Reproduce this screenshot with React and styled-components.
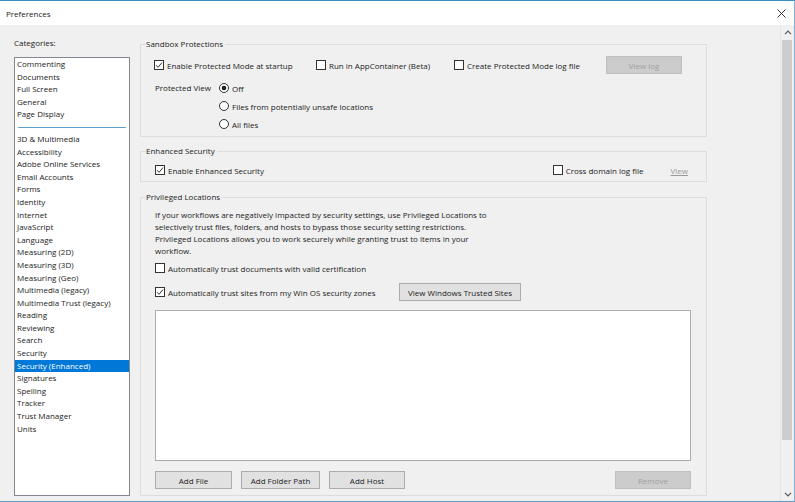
import React from "react";
import styled, { createGlobalStyle } from "styled-components";

const GlobalStyle = createGlobalStyle`
  html, body {
    margin: 0;
    padding: 0;
    background: #f0f0f0;
  }
  body {
    font-family: "Open Sans", "Noto Sans", sans-serif;
    font-size: 8px;
    color: #222;
  }
  * {
    box-sizing: border-box;
  }
`;

const categoriesTop = ["Commenting", "Documents", "Full Screen", "General", "Page Display"];

const categories = [
  "3D & Multimedia",
  "Accessibility",
  "Adobe Online Services",
  "Email Accounts",
  "Forms",
  "Identity",
  "Internet",
  "JavaScript",
  "Language",
  "Measuring (2D)",
  "Measuring (3D)",
  "Measuring (Geo)",
  "Multimedia (legacy)",
  "Multimedia Trust (legacy)",
  "Reading",
  "Reviewing",
  "Search",
  "Security",
  "Security (Enhanced)",
  "Signatures",
  "Spelling",
  "Tracker",
  "Trust Manager",
  "Units",
];

const CheckIcon = ({ checked }) => (
  <svg width="10" height="10" viewBox="0 0 10 10">
    <rect x="0.5" y="0.5" width="9" height="9" fill="#fff" stroke="#333" />
    {checked && (
      <path d="M2 5.2 L4 7.3 L8 2.6" fill="none" stroke="#333" strokeWidth="1" />
    )}
  </svg>
);

const RadioIcon = ({ checked }) => (
  <svg width="10" height="10" viewBox="0 0 10 10">
    <circle cx="5" cy="5" r="4.5" fill="#fff" stroke="#333" />
    {checked && <circle cx="5" cy="5" r="2.3" fill="#222" />}
  </svg>
);

const Preferences = () => {
  return (
    <>
      <GlobalStyle />
      <Window>
        <TitleBar>
          <span>Preferences</span>
          <CloseButton>
            <svg width="9" height="9" viewBox="0 0 9 9">
              <path d="M0.5 0.5 L8.5 8.5 M8.5 0.5 L0.5 8.5" stroke="#333" strokeWidth="1" />
            </svg>
          </CloseButton>
        </TitleBar>

        <Body>
          <Sidebar>
            <SideLabel>Categories:</SideLabel>
            <CategoryList>
              {categoriesTop.map((c) => (
                <Category key={c}>{c}</Category>
              ))}
              <Separator />
              {categories.map((c) => (
                <Category key={c} selected={c === "Security (Enhanced)"}>
                  {c}
                </Category>
              ))}
            </CategoryList>
          </Sidebar>

          <Content>
            <GroupBox>
              <Legend>Sandbox Protections</Legend>
              <TopRow>
                <Check>
                  <CheckIcon checked />
                  Enable Protected Mode at startup
                </Check>
                <Check>
                  <CheckIcon />
                  Run in AppContainer (Beta)
                </Check>
                <Check>
                  <CheckIcon />
                  Create Protected Mode log file
                </Check>
                <Button disabled width="76px">
                  View log
                </Button>
              </TopRow>
              <ViewGrid>
                <span>Protected View</span>
                <RadioList>
                  <Check>
                    <RadioIcon checked />
                    Off
                  </Check>
                  <Check>
                    <RadioIcon />
                    Files from potentially unsafe locations
                  </Check>
                  <Check>
                    <RadioIcon />
                    All files
                  </Check>
                </RadioList>
              </ViewGrid>
            </GroupBox>

            <GroupBox gap="8px" pt="4px" pb="2px">
              <Legend>Enhanced Security</Legend>
              <SplitRow>
                <Check>
                  <CheckIcon checked />
                  Enable Enhanced Security
                </Check>
                <Check>
                  <CheckIcon />
                  Cross domain log file
                </Check>
                <LinkText>View</LinkText>
              </SplitRow>
            </GroupBox>

            <GroupBox gap="9px" pt="6px" pb="6px" grow>
              <Legend>Privileged Locations</Legend>
              <Paragraph>
                If your workflows are negatively impacted by security settings, use Privileged Locations to
                selectively trust files, folders, and hosts to bypass those security setting restrictions.
                Privileged Locations allows you to work securely while granting trust to items in your
                workflow.
              </Paragraph>
              <Row>
                <Check>
                  <CheckIcon />
                  Automatically trust documents with valid certification
                </Check>
              </Row>
              <TrustRow>
                <Check>
                  <CheckIcon checked />
                  Automatically trust sites from my Win OS security zones
                </Check>
                <Button width="122px">View Windows Trusted Sites</Button>
              </TrustRow>
              <LocationList />
              <ButtonRow>
                <Button width="77px">Add File</Button>
                <Button width="79px">Add Folder Path</Button>
                <Button width="76px">Add Host</Button>
                <Button disabled width="76px" push>
                  Remove
                </Button>
              </ButtonRow>
            </GroupBox>
          </Content>

          <ScrollBar>
            <ScrollArrow>
              <svg width="8" height="5" viewBox="0 0 8 5">
                <path d="M1 4.2 L4 1.2 L7 4.2" fill="none" stroke="#555" strokeWidth="1.2" />
              </svg>
            </ScrollArrow>
            <ScrollTrack>
              <ScrollThumb />
            </ScrollTrack>
            <ScrollArrow>
              <svg width="8" height="5" viewBox="0 0 8 5">
                <path d="M1 0.8 L4 3.8 L7 0.8" fill="none" stroke="#555" strokeWidth="1.2" />
              </svg>
            </ScrollArrow>
          </ScrollBar>
        </Body>
      </Window>
    </>
  );
};

export default Preferences;

// window frame

const Window = styled.div`
  width: 795px;
  height: 502px;
  display: flex;
  flex-direction: column;
  border-top: 1px solid #3d8dbf;
  border-bottom: 1px solid #5b9bc8;
  border-right: 1px solid #7fb0d4;
  background: #f0f0f0;
  overflow: hidden;
`;

const TitleBar = styled.div`
  height: 24px;
  flex-shrink: 0;
  display: flex;
  align-items: center;
  justify-content: space-between;
  padding: 0 7px 0 6px;
  background: #fff;
  color: #222;
`;

const CloseButton = styled.div`
  display: flex;
  align-items: center;
  margin-right: 1px;
`;

const Body = styled.div`
  flex: 1;
  display: flex;
  min-height: 0;
`;

// categories

const Sidebar = styled.div`
  width: 140px;
  padding: 12px 10px 5px 14px;
  display: flex;
  flex-direction: column;
  flex-shrink: 0;
`;

const SideLabel = styled.div`
  line-height: 12px;
  height: 20px;
`;

const CategoryList = styled.div`
  flex: 1;
  background: #fff;
  border: 1px solid #828790;
`;

const Category = styled.div`
  line-height: 12.6px;
  height: 12.6px;
  padding-left: 2px;
  white-space: nowrap;
  background: ${(p) => (p.selected ? "#0078d7" : "transparent")};
  color: ${(p) => (p.selected ? "#fff" : "#222")};
`;

const Separator = styled.div`
  height: 1px;
  background: #5e9dc8;
  margin: 6px 3px 5px 3px;
`;

// right panel

const Content = styled.div`
  width: 567px;
  padding-top: 13px;
  display: flex;
  flex-direction: column;
  flex-shrink: 0;
`;

const GroupBox = styled.fieldset`
  margin: ${(p) => p.gap || "0"} 0 0 0;
  padding: ${(p) => p.pt || "6px"} 15px ${(p) => p.pb || "3px"} 14px;
  border: 1px solid #dcdcdc;
  min-width: 0;
  display: flex;
  flex-direction: column;
  ${(p) => (p.grow ? "flex: 1; margin-bottom: 6px;" : "")}
`;

const Legend = styled.legend`
  line-height: 12px;
  padding: 0 2px 0 0;
  margin-left: -9px;
  color: #222;
`;

const Check = styled.label`
  display: flex;
  align-items: center;
  gap: 3px;
  height: 18px;
  white-space: nowrap;

  svg {
    flex-shrink: 0;
  }
`;

const TopRow = styled.div`
  display: grid;
  grid-template-columns: 162px 138px 152px 76px;
  align-items: center;
  margin-left: -1px;
`;

const ViewGrid = styled.div`
  display: grid;
  grid-template-columns: 64px 1fr;
  margin-top: 5px;

  > span {
    line-height: 18px;
  }
`;

const RadioList = styled.div`
  display: flex;
  flex-direction: column;
`;

const SplitRow = styled.div`
  display: flex;
  align-items: center;
  padding-right: 3px;

  > label:first-child {
    flex: 1;
  }
`;

const LinkText = styled.span`
  color: #9a9a9a;
  text-decoration: underline;
  margin-left: 27px;
`;

const Paragraph = styled.p`
  margin: 0;
  line-height: 12px;
  width: 340px;
`;

const Row = styled.div`
  display: flex;
  align-items: center;
  margin-top: 2px;
`;

const TrustRow = styled.div`
  display: grid;
  grid-template-columns: 244px 122px;
  align-items: center;
  margin-top: 6px;
`;

const LocationList = styled.div`
  height: 151px;
  margin-top: 9px;
  background: #fff;
  border: 1px solid #abadb3;
`;

const ButtonRow = styled.div`
  display: flex;
  gap: 9px;
  margin-top: 10px;
`;

const Button = styled.button`
  width: ${(p) => p.width};
  height: 18px;
  padding: 0;
  font: inherit;
  margin-left: ${(p) => (p.push ? "auto" : "0")};
  background: ${(p) => (p.disabled ? "#cccccc" : "#e1e1e1")};
  border: 1px solid ${(p) => (p.disabled ? "#bfbfbf" : "#adadad")};
  color: ${(p) => (p.disabled ? "#a0a0a0" : "#222")};
`;

// scroll bar

const ScrollBar = styled.div`
  margin-left: auto;
  width: 14px;
  display: flex;
  flex-direction: column;
  background: #f0f0f0;
  border-left: 1px solid #e6e6e6;
`;

const ScrollArrow = styled.div`
  height: 14px;
  display: flex;
  align-items: center;
  justify-content: center;
`;

const ScrollTrack = styled.div`
  flex: 1;
  padding: 1px 2px 0 1px;
`;

const ScrollThumb = styled.div`
  height: 400px;
  background: #cdcdcd;
`;
